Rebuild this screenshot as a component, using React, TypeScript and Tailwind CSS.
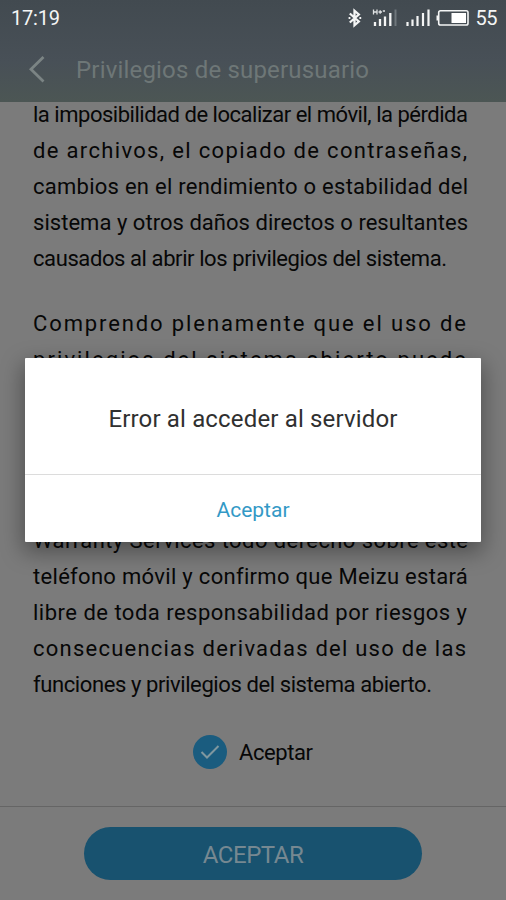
import { useLayoutEffect, useRef, useState } from 'react'

interface FitTextProps {
  text: string
  width: number
  className?: string
}

// Spreads the letters of one line until the line is `width` pixels wide
function FitText({ text, width, className = '' }: FitTextProps) {
  const ref = useRef<HTMLSpanElement>(null)
  const [spacing, setSpacing] = useState(0)

  useLayoutEffect(() => {
    if (!ref.current) return
    const natural = ref.current.getBoundingClientRect().width - spacing * text.length
    setSpacing((width - natural) / (text.length - 1))
  }, [text, width])

  return (
    <span ref={ref} className={`inline-block whitespace-nowrap ${className}`} style={{ letterSpacing: `${spacing}px` }}>
      {text}
    </span>
  )
}

const firstParagraph = [
  { text: 'la imposibilidad de localizar el móvil, la pérdida', width: 435 },
  { text: 'de archivos, el copiado de contraseñas,', width: 434 },
  { text: 'cambios en el rendimiento o estabilidad del', width: 435 },
  { text: 'sistema y otros daños directos o resultantes', width: 435 },
  { text: 'causados al abrir los privilegios del sistema.', width: 414 },
]

const secondParagraph = [
  { text: 'Comprendo plenamente que el uso de', width: 433 },
  { text: 'privilegios del sistema abierto puede', width: 433 },
]

const lastParagraph = [
  { text: 'Warranty Services todo derecho sobre este', width: 435 },
  { text: 'teléfono móvil y confirmo que Meizu estará', width: 434 },
  { text: 'libre de toda responsabilidad por riesgos y', width: 434 },
  { text: 'consecuencias derivadas del uso de las', width: 433 },
  { text: 'funciones y privilegios del sistema abierto.', width: 399 },
]

function Paragraph({ lines }: { lines: { text: string; width: number }[] }) {
  return (
    <div className="flex flex-col">
      {lines.map((line) => (
        <div key={line.text} className="h-9 leading-9">
          <FitText {...line} />
        </div>
      ))}
    </div>
  )
}

function StatusIcons() {
  return (
    <svg width="124" height="24" viewBox="346 6 124 24" fill="none">
      {/* bluetooth */}
      <path d="M349.800 13.500l9 8-4.300 3.800V10.700l4.300 3.800-9 8" stroke="#f4f5f5" strokeWidth="2.300" />
      <path d="M349.500 17v2M360.300 17v2" stroke="#f4f5f5" strokeWidth="1.800" />
      {/* H+ signal */}
      <path d="M373.500 9.500v5M377 9.500v5M373.500 12h3.500M378.500 12h3.500M380.200 10.300v3.400M382.800 11h2.200" stroke="#dfe2e3" strokeWidth="1.300" />
      <path d="M375 22v4M380 19v7M385 16.500v9.500M390.300 13v13" stroke="#f4f5f5" strokeWidth="2.300" />
      <path d="M395.500 9.500v16.500" stroke="#6f777c" strokeWidth="2" />
      {/* second sim signal */}
      <path d="M407.500 22v4M412.500 19.500v6.500M417.500 16v10M423 13v13M428.500 9.500v16.500" stroke="#f4f5f5" strokeWidth="2.200" />
      {/* battery */}
      <rect x="438.700" y="10.700" width="29.300" height="14.300" rx="1.800" stroke="#f4f5f5" strokeWidth="1.600" />
      <path d="M437.300 15.500v5" stroke="#f4f5f5" strokeWidth="1.600" />
      <rect x="451.500" y="13" width="14.500" height="10" fill="#fff" />
    </svg>
  )
}

function Header() {
  return (
    <header className="relative z-10 h-[102px] shrink-0 bg-linear-to-b from-[#424a50] via-[#485057] via-60% to-[#4c5654]">
      <div className="flex h-9 items-center justify-between pl-[11px] pr-[9px] text-[20px] text-[#f4f5f5]">
        <FitText text="17:19" width={49} />
        <div className="flex items-center gap-[5px]">
          <StatusIcons />
          <FitText text="55" width={22} />
        </div>
      </div>
      <div className="flex h-[66px] items-center pl-7">
        <svg width="18" height="28" viewBox="0 0 18 28" fill="none" stroke="#7b8484" strokeWidth="2.800">
          <path d="M15.500 2L3 14.200 15.500 26.500" />
        </svg>
        <h1 className="pl-[30px] pt-0.5 text-[24px] text-[#6e7777]">
          <FitText text="Privilegios de superusuario" width={293} />
        </h1>
      </div>
    </header>
  )
}

function Dialog() {
  return (
    <div className="absolute left-[25px] top-[358px] z-20 flex h-[184px] w-[456px] flex-col rounded-[1px] bg-white shadow-[0_8px_22px_2px_rgba(0,0,0,0.36)]">
      <div className="flex h-[117px] items-center justify-center border-b border-[#dcdcdc] pt-[5px] text-[24px] text-[#303030]">
        <FitText text="Error al acceder al servidor" width={289} />
      </div>
      <button className="flex flex-1 items-center justify-center pt-1 text-[21px] text-[#3399c6]">
        <FitText text="Aceptar" width={73} />
      </button>
    </div>
  )
}

export default function App() {
  return (
    <div className="relative flex h-[900px] w-[506px] flex-col overflow-hidden bg-[#7b7b7b] font-['Roboto','Liberation_Sans',sans-serif]">
      <Header />
      <main className="-mt-[5px] flex h-[709px] shrink-0 flex-col pl-[33px] text-[22px] text-[#070707]">
        <Paragraph lines={firstParagraph} />
        <div className="pt-[29px]">
          <Paragraph lines={secondParagraph} />
        </div>
        <div className="pt-[145px]">
          <Paragraph lines={lastParagraph} />
        </div>
        <label className="flex items-center gap-3 pl-[160px] pt-[31px]">
          <span className="flex size-[34px] items-center justify-center rounded-full bg-[#1a5c7f]">
            <svg width="20" height="16" viewBox="0 0 20 16" fill="none" stroke="#7f979f" strokeWidth="2">
              <path d="M1.500 8l5.500 5.500L18.500 2" />
            </svg>
          </span>
          <FitText text="Aceptar" width={74} className="pt-0.5" />
        </label>
      </main>
      <footer className="flex flex-1 items-start justify-center border-t border-[#656565] pt-5">
        <button className="flex h-[53px] w-[338px] items-center justify-center rounded-full bg-[#18526f] pt-[3px] text-[24px] text-[#768891]">
          <FitText text="ACEPTAR" width={101} />
        </button>
      </footer>
      <Dialog />
    </div>
  )
}
